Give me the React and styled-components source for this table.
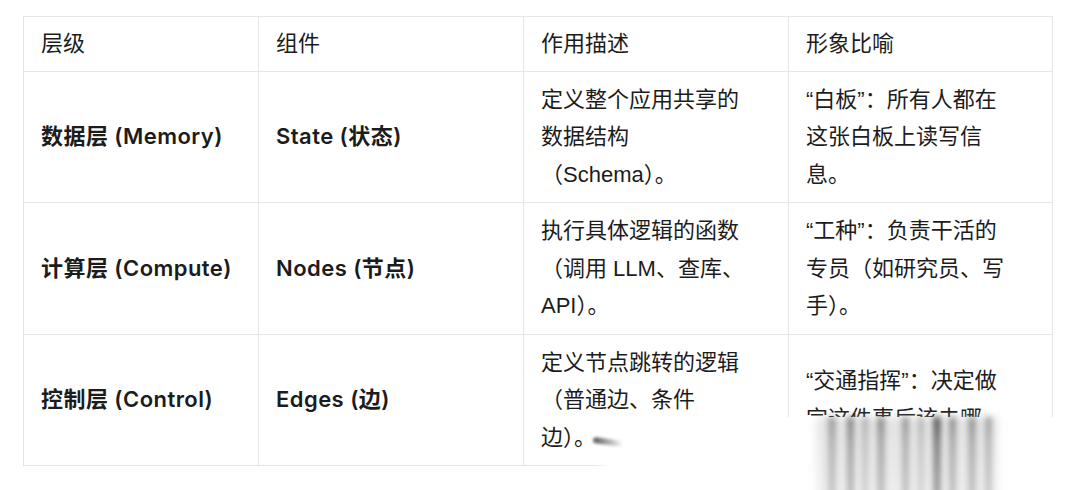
import React from 'react';
import styled, { createGlobalStyle } from 'styled-components';

const GlobalStyle = createGlobalStyle`
  html, body {
    margin: 0;
    padding: 0;
    background: #ffffff;
  }
  body {
    font-family: "Liberation Sans", "Noto Sans CJK SC", sans-serif;
    color: #1c1c1c;
  }
`;

const columns = [
  { title: '层级', width: 235, pr: 4 },
  { title: '组件', width: 265, pr: 12 },
  { title: '作用描述', width: 265, pr: 44 },
  { title: '形象比喻', width: 264, pr: 44 },
];

const rows = [
  ['数据层 (Memory)', 'State (状态)', '定义整个应用共享的数据结构（Schema）。', '“白板”：所有人都在这张白板上读写信息。'],
  ['计算层 (Compute)', 'Nodes (节点)', '执行具体逻辑的函数（调用 LLM、查库、API）。', '“工种”：负责干活的专员（如研究员、写手）。'],
  ['控制层 (Control)', 'Edges (边)', '定义节点跳转的逻辑（普通边、条件边）。', '“交通指挥”：决定做完这件事后该去哪。'],
];

// x offsets of the smeared glyph columns, relative to the overlay
const streaks = [
  { x: 234, w: 6, o: 0.5 },
  { x: 253, w: 5, o: 0.75 },
  { x: 268, w: 4, o: 0.45 },
  { x: 283, w: 6, o: 0.6 },
  { x: 308, w: 5, o: 0.6 },
  { x: 324, w: 4, o: 0.4 },
  { x: 339, w: 6, o: 1 },
  { x: 355, w: 5, o: 0.65 },
  { x: 374, w: 6, o: 0.55 },
  { x: 391, w: 5, o: 0.5 },
];

const App = () => {
  return (
    <>
      <GlobalStyle />
      <Page>
        <Frame>
          <Table>
            <colgroup>
              {columns.map((c) => (
                <col key={c.title} style={{ width: c.width }} />
              ))}
            </colgroup>
            <thead>
              <tr>
                {columns.map((c) => (
                  <HeadCell key={c.title} $pr={c.pr}>{c.title}</HeadCell>
                ))}
              </tr>
            </thead>
            <tbody>
              {rows.map((r) => (
                <tr key={r[0]}>
                  {r.map((text, i) => (
                    <Cell key={i} $pr={columns[i].pr} $strong={i < 2}>
                      {text}
                    </Cell>
                  ))}
                </tr>
              ))}
            </tbody>
          </Table>
          <Smudge>
            <Haze />
            {streaks.map((s) => (
              <Streak key={s.x} style={{ left: s.x, width: s.w, opacity: s.o }} />
            ))}
          </Smudge>
          <Dot />
        </Frame>
      </Page>
    </>
  );
};

const Page = styled.div`
  padding: 16px 0 0 23px;
  height: 474px;
  overflow: hidden;
`;

const Frame = styled.div`
  position: relative;
  width: 1029px;
`;

const Table = styled.table`
  border-collapse: collapse;
  table-layout: fixed;
  width: 1029px;
  font-size: 22px;
  line-height: 37.5px;
`;

const HeadCell = styled.th`
  border: 1px solid #e4e6e9;
  padding: 8px ${(p) => p.$pr}px 8px 17px;
  text-align: left;
  font-weight: 400;
  height: 37px;
  vertical-align: middle;
`;

const Cell = styled.td`
  border: 1px solid #e4e6e9;
  padding: 9px ${(p) => p.$pr}px 9px 17px;
  height: 112px;
  vertical-align: middle;
  font-family: ${(p) => (p.$strong ? '"Inter", "Noto Sans CJK SC", sans-serif' : 'inherit')};
  font-weight: ${(p) => (p.$strong ? 600 : 400)};
  letter-spacing: ${(p) => (p.$strong ? '0.45px' : 'normal')};
  white-space: ${(p) => (p.$strong ? 'nowrap' : 'normal')};
`;

const Smudge = styled.div`
  position: absolute;
  left: 572px;
  top: 401px;
  width: 520px;
  height: 90px;
  background: linear-gradient(to right, rgba(255, 255, 255, 0) 0, #ffffff 14px);
`;

const Haze = styled.div`
  position: absolute;
  left: 222px;
  top: 0;
  width: 180px;
  height: 90px;
  background: linear-gradient(to bottom, rgba(190, 190, 190, 0.45), rgba(215, 215, 215, 0.4));
  filter: blur(5px);
`;

const Streak = styled.div`
  position: absolute;
  top: 0;
  height: 90px;
  background: linear-gradient(to bottom, #2e2e2e 0, #666 30%, #999 100%);
  filter: blur(3px);
`;

const Dot = styled.div`
  position: absolute;
  left: 570px;
  top: 423px;
  width: 30px;
  height: 6px;
  border-radius: 3px;
  background: linear-gradient(to right, #555 0, rgba(150, 150, 150, 0.5) 70%, rgba(200, 200, 200, 0) 100%);
  filter: blur(1.5px);
  transform: rotate(8deg);
`;

export default App;
